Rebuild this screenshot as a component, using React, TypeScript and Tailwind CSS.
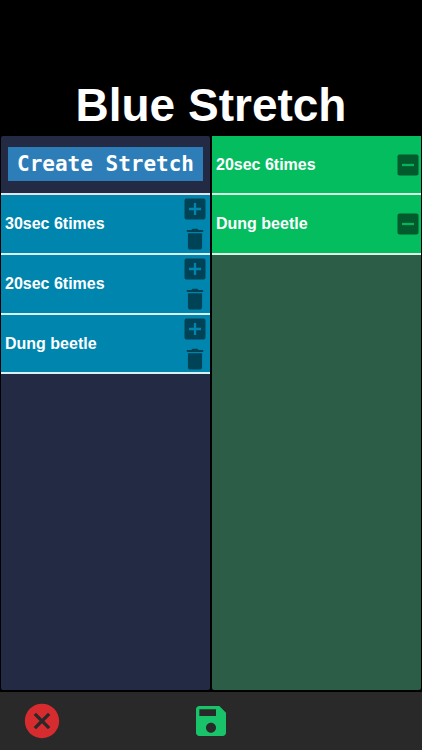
import type { ReactNode } from 'react';

type Stretch = {
  id: number;
  name: string;
};

const stretches: Stretch[] = [
  { id: 1, name: '30sec 6times' },
  { id: 2, name: '20sec 6times' },
  { id: 3, name: 'Dung beetle' },
];

const selected: Stretch[] = [
  { id: 2, name: '20sec 6times' },
  { id: 3, name: 'Dung beetle' },
];

const Icon = ({ className, children }: { className: string; children: ReactNode }) => (
  <svg
    xmlns="http://www.w3.org/2000/svg"
    className={className}
    viewBox="0 0 24 24"
    fill="currentColor"
    aria-hidden="true"
  >
    {children}
  </svg>
);

const StretchRow = ({ name }: Stretch) => (
  <li className="flex h-[60px] items-center justify-between border-b-2 border-[#d8f1f6] bg-[#0086ae] pr-[3px] pl-1 last:h-[59px]">
    <span>{name}</span>
    <div className="flex flex-col items-center gap-1.5">
      <button type="button" aria-label={`Add ${name}`} className="text-[#004256]">
        <Icon className="size-6">
          <rect x="1.5" y="1.5" width="21" height="21" rx="2" />
          <path d="M12 6v12M6 12h12" stroke="#0086ae" strokeWidth="2.3" />
        </Icon>
      </button>
      <button type="button" aria-label={`Delete ${name}`} className="text-[#004256]">
        <Icon className="size-6">
          <path d="M4.9 6.2h14.2v14c0 1.3-1 2.4-2.4 2.4H7.3c-1.4 0-2.4-1.1-2.4-2.4zM3.8 2.9h4.6l1.2-1.2h4.8l1.2 1.2h4.6V5H3.8z" />
        </Icon>
      </button>
    </div>
  </li>
);

const SelectedRow = ({ name }: Stretch) => (
  <li className="flex h-[60px] items-center justify-between border-b-2 border-[#d8f8e5] bg-[#04bd5f] pr-px pl-1 first:h-[59px]">
    <span>{name}</span>
    <button type="button" aria-label={`Remove ${name}`} className="text-[#025a2d]">
      <Icon className="size-6">
        <rect x="1.5" y="1.5" width="21" height="21" rx="2" />
        <path d="M6 12h12" stroke="#04b35a" strokeWidth="2.3" />
      </Icon>
    </button>
  </li>
);

const App = () => {
  return (
    <div className="flex min-h-screen flex-col bg-black font-['Liberation_Sans',Arial,sans-serif] font-bold text-white">
      <header className="pt-[75px] pb-px">
        <h1 className="text-center text-[46px] leading-[60px]">Blue Stretch</h1>
      </header>

      <main className="grid flex-1 grid-cols-2 gap-0.5 px-px pb-0.5 text-base">
        <section className="rounded-xs bg-[#232a44]">
          <div className="flex h-[59px] items-center border-b-2 border-[#dfe5ee] px-[7px] pb-px">
            <button
              type="button"
              className="h-[34px] w-full bg-[#2d7eb8] font-['DejaVu_Sans_Mono',monospace] text-[21px] leading-[34px] whitespace-nowrap"
            >
              Create Stretch
            </button>
          </div>
          <ul>
            {stretches.map((item) => (
              <StretchRow key={item.id} {...item} />
            ))}
          </ul>
        </section>

        <section className="rounded-xs bg-[#2b5d47]">
          <ul>
            {selected.map((item) => (
              <SelectedRow key={item.id} {...item} />
            ))}
          </ul>
        </section>
      </main>

      <footer className="grid h-[58px] grid-cols-5 items-center bg-[#292929] pb-px">
        <button type="button" aria-label="Cancel" className="justify-self-center text-[#d62c2f]">
          <Icon className="size-10">
            <path d="M12 1.7C6.3 1.7 1.7 6.3 1.7 12S6.3 22.3 12 22.3 22.3 17.7 22.3 12 17.7 1.7 12 1.7zm5 13.89L15.59 17 12 13.41 8.41 17 7 15.59 10.59 12 7 8.41 8.41 7 12 10.59 15.59 7 17 8.41 13.41 12 17 15.59z" />
          </Icon>
        </button>
        <button
          type="button"
          aria-label="Save"
          className="col-start-3 justify-self-center text-[#18c36a]"
        >
          <Icon className="size-10">
            <path d="M17 3H5c-1.11 0-2 .9-2 2v14c0 1.1.89 2 2 2h14c1.1 0 2-.9 2-2V7l-4-4zm-5 16c-1.66 0-3-1.34-3-3s1.34-3 3-3 3 1.34 3 3-1.34 3-3 3zm3-10H5V5h10v4z" />
          </Icon>
        </button>
      </footer>
    </div>
  );
};

export default App;
